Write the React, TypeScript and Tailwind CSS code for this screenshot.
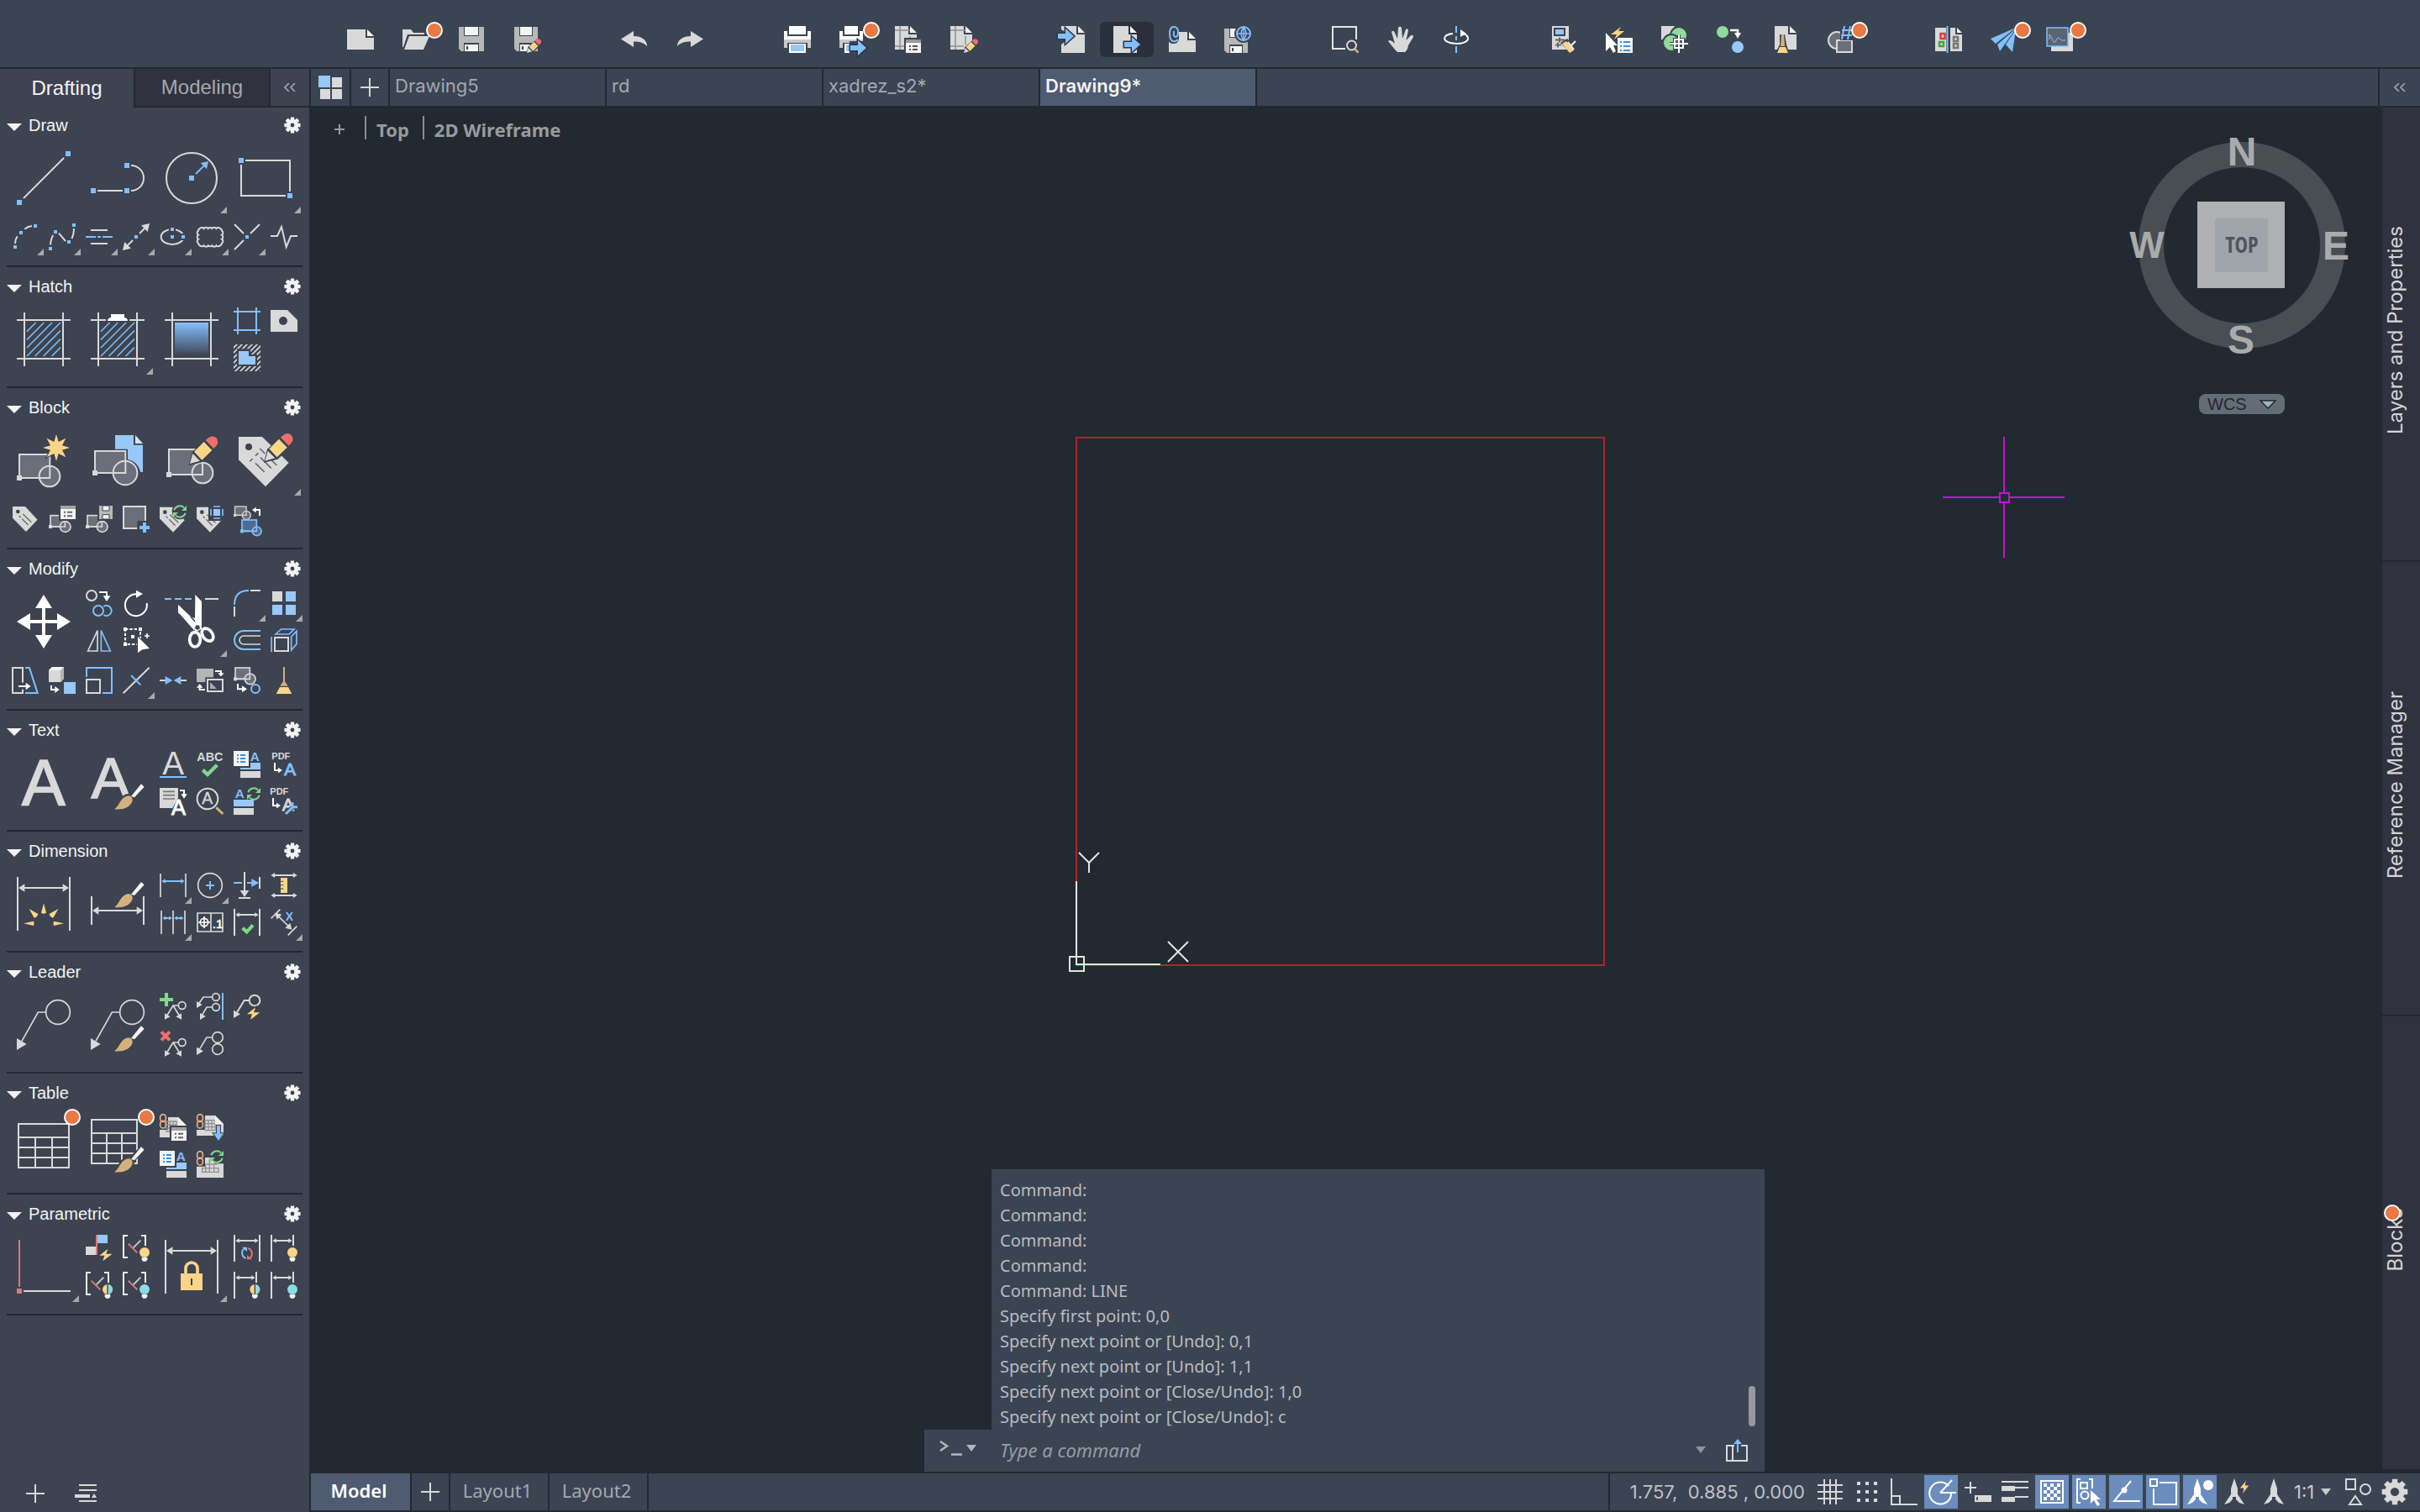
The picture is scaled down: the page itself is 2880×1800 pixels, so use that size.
import React from "react";

const W = "#d9d9d9";
const L = "#f4f4f4";
const B = "#82bfff";
const F = "#97c8f8";
const G = "#6b6f7a";
const Y = "#fad587";
const R = "#ef6f6a";
const N = "#7fd98c";
const BG = "#3d4350";
const TAN = "#d4b07c";

type P = { x: number; y: number };

/* Palette drawings use three units per pixel; x and y are the top-left corner of the glyph box. */
function Ico({ x, y, big, children }: P & { big?: boolean; children: React.ReactNode }) {
  const s = big ? 192 : 96;
  return (
    <svg viewBox={`${x} ${y} ${s} ${s}`} className={big ? "size-16 overflow-visible" : "size-8 overflow-visible"} fill="none" stroke={W} strokeWidth={6} aria-hidden="true">
      {children}
    </svg>
  );
}
const Sq = ({ x, y, s = 18, c = B }: P & { s?: number; c?: string }) => <rect x={x} y={y} width={s} height={s} fill={c} stroke="none" />;
const Fill = ({ d, c = W, o }: { d: string; c?: string; o?: boolean }) => <path d={d} fill={c} stroke={o ? BG : "none"} strokeWidth={o ? 6 : 0} paintOrder="stroke" />;
const T = ({ x, y, s, c = W, w = 0, b, children }: P & { s: number; c?: string; w?: number; b?: boolean; children: string }) => (
  <text x={x} y={y} fontSize={s} fill={c} stroke={w ? c : "none"} strokeWidth={w} fontWeight={b ? 700 : 400} fontFamily="Liberation Sans, Arial, sans-serif">
    {children}
  </text>
);
const Pencil = ({ x, y, k = 1 }: P & { k?: number }) => (
  <g transform={`translate(${x} ${y}) scale(${k})`} stroke="none">
    <path d="M-4 6L8 -42L66 -94A24 24 0 0 1 98 -56L46 -6Z" fill={BG} />
    <path d="M0 0L10 -36L36 -10Z" fill={W} />
    <path d="M15 -43L50 -78L79 -48L43 -13Z" fill={Y} />
    <path d="M56 -84L66 -92A19 19 0 0 1 94 -64L85 -54Z" fill={R} />
  </g>
);
const Brush = ({ x, y }: P) => (
  <g transform={`translate(${x} ${y})`} stroke="none">
    <path d="M-8 6C10 -10 18 -58 56 -56L100 -98L116 -80L74 -40C66 0 30 8 -8 6Z" fill={BG} />
    <path d="M60 -46L96 -90L107 -80L72 -42Z" fill={L} />
    <path d="M0 0C20 -12 22 -46 52 -48C62 -46 66 -40 65 -30C58 -6 30 4 0 0Z" fill={TAN} />
  </g>
);
const Bolt = ({ x, y }: P) => <Fill c={Y} o d={`M${x + 30} ${y}L${x} ${y + 24}H${x + 18}L${x + 12} ${y + 44}L${x + 46} ${y + 18}H${x + 24}Z`} />;
const Sync = ({ x, y, a = N, b = N }: P & { a?: string; b?: string }) => (
  <g transform={`translate(${x} ${y})`} strokeWidth={6}>
    <path d="M-20 -5A21 21 0 0 1 15 -14M20 5A21 21 0 0 1 -15 14" stroke={a} />
    <path d="M24 -21V-3H6Z" fill={a} stroke="none" />
    <path d="M-24 21V3H-6Z" fill={b} stroke="none" />
  </g>
);
const Frame = ({ x, y }: P) => <path d={`M${x + 27} ${y}v192M${x + 165} ${y}v192M${x} ${y + 27}h192M${x} ${y + 165}h192`} />;
const Hatching = ({ x, y }: P) => (
  <path stroke="#7db9f5" strokeWidth={5} d={`M${x} ${y + 32}l32 -32M${x} ${y + 61}l61 -61M${x} ${y + 90}l90 -90M${x} ${y + 120}l120 -120M${x + 29} ${y + 120}l91 -91M${x + 59} ${y + 120}l61 -61M${x + 89} ${y + 120}l31 -31`} />
);
const MiniBlock = ({ x, y, c = W, r = 19 }: P & { c?: string; r?: number }) => (
  <g stroke={c} strokeWidth={5}>
    <rect x={x + 6} y={y} width={52} height={40} fill={c === B ? "#4e6b91" : G} />
    <circle cx={x + 59} cy={y + 40} r={r} fill={c === B ? "#4e6b91" : G} />
    <path d={`M${x + 6} ${y + 40}h52v-16`} />
    <rect x={x} y={y + 34} width={12} height={12} fill={c} stroke="none" />
  </g>
);
const Window = ({ x, y }: P) => (
  <g stroke="none">
    <rect x={x - 6} y={y - 6} width={66} height={60} fill={BG} />
    <rect x={x} y={y} width={54} height={48} fill={L} />
    <rect x={x} y={y} width={54} height={12} fill="#a3a3a3" />
    <path d={`M${x + 12} ${y + 20}h6v6h-6zM${x + 24} ${y + 20}h18v6h-18zM${x + 12} ${y + 34}h6v6h-6zM${x + 24} ${y + 34}h18v6h-18z`} fill="#666" />
  </g>
);
const ListCard = ({ x, y }: P) => (
  <g stroke="none">
    <rect x={x - 6} y={y - 6} width={66} height={66} fill={BG} />
    <rect x={x} y={y} width={54} height={54} fill={L} />
    <path d={`M${x + 12} ${y + 12}h6v6h-6zM${x + 24} ${y + 12}h18v6h-18zM${x + 12} ${y + 24}h6v6h-6zM${x + 24} ${y + 24}h18v6h-18zM${x + 12} ${y + 36}h6v6h-6zM${x + 24} ${y + 36}h18v6h-18z`} fill="#3d8ee8" />
  </g>
);
const MiniTag = ({ x, y }: P) => (
  <g transform={`translate(${x} ${y})`}>
    <path d="M0 0H45L89 47L48 90L0 41Z" fill={W} stroke="none" />
    <circle cx={19} cy={18} r={7} fill={BG} stroke="none" />
    <path d="M37 27L67 56M23 33L29 39M34 44L56 66" stroke="#6a6a6a" strokeWidth={4} />
  </g>
);
const Disk = ({ x, y }: P) => (
  <g stroke="none">
    <rect x={x - 6} y={y - 6} width={60} height={60} fill={BG} />
    <rect x={x} y={y} width={48} height={48} fill="#b8b8b8" />
    <path d={`M${x + 12} ${y}h24v18h-24zM${x + 12} ${y + 32}h24v16h-24z`} fill={L} stroke={BG} strokeWidth={3} />
  </g>
);
const HArrow = ({ a, b, y, c = W, s = 1 }: { a: number; b: number; y: number; c?: string; s?: number }) => (
  <g>
    <path d={`M${a + 10} ${y}H${b - 10}`} stroke={c} />
    <path d={`M${a} ${y}l${22 * s} ${-14 * s}v${28 * s}zM${b} ${y}l${-22 * s} ${-14 * s}v${28 * s}z`} fill={c} stroke="none" />
  </g>
);
const Turn = ({ d, h }: { d: string; h: string }) => (
  <g>
    <path d={d} stroke="#fff" />
    <path d={h} fill="#fff" stroke="none" />
  </g>
);
const Bulb = ({ x, y, c = Y, c2 }: P & { c?: string; c2?: string }) => (
  <g stroke="none">
    <circle cx={x} cy={y} r={23} fill={BG} />
    <circle cx={x} cy={y} r={18} fill={c} />
    {c2 && <path d={`M${x} ${y - 18}a18 18 0 0 1 0 36z`} fill={c2} />}
    {c2 && <path d={`M${x} ${y - 20}v40`} stroke={BG} strokeWidth={4} />}
    <path d={`M${x - 10} ${y + 18}h20v8l-5 6h-10l-5 -6z`} fill={L} />
  </g>
);
const Multi = ({ x, y }: P) => (
  <g transform={`translate(${x} ${y})`} strokeWidth={5}>
    <circle cx={62} cy={14} r={13} />
    <path d="M49 14H30L8 50M30 14L52 50" />
    <path d="M0 64V42L20 54ZM60 64V42L40 54Z" fill={W} stroke="none" />
  </g>
);
const LeaderShape = ({ x, y }: P) => (
  <g transform={`translate(${x} ${y})`} strokeWidth={5}>
    <circle cx={147} cy={51} r={43} />
    <path d="M103 51H76L18 154" />
    <path d="M0 186V144L35 165Z" fill={W} stroke="none" />
  </g>
);
const Chain = ({ x, y }: P) => (
  <g stroke="#e8b080" strokeWidth={5}>
    <rect x={x + 2} y={y + 2} width={20} height={26} rx={10} />
    <rect x={x + 2} y={y + 25} width={20} height={26} rx={10} />
  </g>
);
const Cells = ({ x, y }: P) => (
  <g stroke="#8f8f8f" strokeWidth={4}>
    <path d={`M${x} ${y}h36v36h-36zM${x} ${y + 12}h36M${x} ${y + 24}h36M${x + 12} ${y}v36M${x + 24} ${y}v36`} />
  </g>
);
const Bracket = ({ x, y, bulb, bulb2 }: P & { bulb: string; bulb2?: string }) => (
  <g transform={`translate(${x} ${y})`}>
    <path d="M18 3H3V81H18M66 3H81V40" stroke="#f0f0f0" />
    <path d="M20 32L52 64" stroke="#dd7b79" />
    <path d="M38 46L64 20" stroke="#c9c9c9" />
    <Bulb x={78} y={63} c={bulb} c2={bulb2} />
  </g>
);

type Cell = { n: string; big?: boolean; corner?: boolean; badge?: boolean; i: React.ReactNode } | null;
type Section = { title: string; main: Cell[]; row?: Cell[] };

const sections: Section[] = [
  {
    title: "Draw",
    main: [
      { n: "Line", big: true, i: <Ico big x={60} y={330}><path d="M84 498L228 354" /><Sq x={60} y={504} /><Sq x={234} y={330} /></Ico> },
      { n: "Polyline", big: true, i: <Ico big x={324} y={330}><path d="M348 471H438M468 381A45 45 0 0 1 468 471" /><Sq x={324} y={462} /><Sq x={444} y={462} /><Sq x={444} y={372} /></Ico> },
      { n: "Circle", big: true, corner: true, i: <Ico big x={588} y={330}><circle cx={684} cy={426} r={90} /><Sq x={675} y={417} /><path d="M699 411L728 382" stroke={B} /><Fill c={B} d="M744 366L738 394L716 372Z" /></Ico> },
      { n: "Rectangle", big: true, corner: true, i: <Ico big x={852} y={330}><path d="M876 363H1035V474M1020 489H861V378" /><Sq x={852} y={354} /><Sq x={1026} y={480} /></Ico> },
    ],
    row: [
      { n: "Arc", corner: true, i: <Ico x={42} y={588}><path d="M54 660Q54 645 62 634M88 608Q98 599 114 597" /><Sq s={12} x={48} y={666} /><Sq s={12} x={69} y={615} /><Sq s={12} x={120} y={591} /></Ico> },
      { n: "Spline", corner: true, i: <Ico x={174} y={588}><path d="M180 664Q182 642 190 630M210 623L234 651M264 606Q263 630 256 642" /><Sq s={12} x={174} y={672} /><Sq s={12} x={192} y={612} /><Sq s={12} x={240} y={648} /><Sq s={12} x={258} y={588} /></Ico> },
      { n: "Centerline", corner: true, i: <Ico x={306} y={588}><path d="M324 612H384M324 660H384" /><path stroke={B} d="M306 636H342M348 636H360M366 636H402" /></Ico> },
      { n: "Construction line", corner: true, i: <Ico x={438} y={588}><path d="M498 624L516 606M474 648L456 666" /><Fill d="M534 588L527 618L504 595ZM438 684L445 654L468 677Z" /><Sq s={12} x={480} y={630} /></Ico> },
      { n: "Ellipse", corner: true, i: <Ico x={570} y={588}><ellipse cx={615} cy={636} rx={40} ry={27} /><rect x={603} y={598} width={24} height={22} fill={BG} stroke="none" /><rect x={642} y={624} width={24} height={24} fill={BG} stroke="none" /><Sq s={12} x={609} y={603} /><Sq s={12} x={609} y={630} /><Sq s={12} x={648} y={630} /></Ico> },
      { n: "Revision cloud", corner: true, i: <Ico x={702} y={588}><path d="M714 606a8 6 0 0 1 14 0a8 6 0 0 1 15 0a8 6 0 0 1 14 0a8 6 0 0 1 15 0a8 6 0 0 1 14 0a9 9 0 0 1 6 8a6 8 0 0 1 0 15a6 8 0 0 1 0 15a6 8 0 0 1 0 15a9 9 0 0 1 -6 8a8 6 0 0 1 -14 0a8 6 0 0 1 -15 0a8 6 0 0 1 -14 0a8 6 0 0 1 -15 0a8 6 0 0 1 -14 0a9 9 0 0 1 -6 -8a6 8 0 0 1 0 -15a6 8 0 0 1 0 -15a6 8 0 0 1 0 -15a9 9 0 0 1 6 -8" /></Ico> },
      { n: "Point", corner: true, i: <Ico x={834} y={588}><path d="M837 591L870 624M927 591L894 624M837 681L870 648" /><Sq s={12} x={876} y={630} /></Ico> },
      { n: "Break line", i: <Ico x={966} y={588}><path d="M966 633H990L1005 600L1022 672L1038 633H1062" /></Ico> },
    ],
  },
  {
    title: "Hatch",
    main: [
      { n: "Hatch fill", big: true, i: <Ico big x={60} y={906}><Frame x={60} y={906} /><Hatching x={96} y={942} /></Ico> },
      { n: "Hatch edit", big: true, corner: true, i: <Ico big x={324} y={906}><Frame x={324} y={906} /><Hatching x={360} y={942} /><rect x={378} y={924} width={84} height={14} fill={BG} stroke="none" /><Fill c="#fff" d="M396 912H444V924Q456 926 456 936H384Q384 926 396 924Z" /></Ico> },
      {
        n: "Gradient", big: true,
        i: <Ico big x={588} y={906}><defs><linearGradient id="fade" x1="0" y1="0" x2="0" y2="1"><stop offset="0" stopColor={B} /><stop offset="1" stopColor={BG} /></linearGradient></defs><Frame x={588} y={906} /><rect x={624} y={942} width={120} height={120} fill="url(#fade)" stroke="none" /></Ico>,
      },
      { n: "Boundary", i: <Ico x={834} y={888}><path stroke={B} d="M849 888V984M915 888V984M834 903H930M834 969H930" /></Ico> },
      { n: "Wipeout", i: <Ico x={966} y={888}><Fill d="M966 897H1026L1062 933V975H966Z" /><circle cx={1011} cy={936} r={15} fill={BG} stroke="none" /></Ico> },
      {
        n: "Region",
        i: <Ico x={834} y={1020}><defs><clipPath id="regionBox"><rect x={834} y={1020} width={96} height={96} /></clipPath></defs><g clipPath="url(#regionBox)" strokeWidth={5}><path d="M822 1044l30 -30M822 1062l48 -48M822 1080l66 -66M822 1098l84 -84M822 1116l102 -102M830 1126l110 -110M848 1126l90 -90M866 1126l72 -72M884 1126l54 -54M902 1126l36 -36M920 1126l18 -18" /></g><Fill c={BG} d="M846 1036H894V1056H918V1098H846Z" /><Fill c={F} d="M852 1044H888V1062H912V1092H852Z" /></Ico>,
      },
    ],
  },
  {
    title: "Block",
    main: [
      { n: "Create block", big: true, i: <Ico big x={60} y={168}><rect x={69} y={243} width={109} height={84} fill={G} /><circle cx={177} cy={321} r={37} fill={G} /><path d="M140 327H178V284" /><Sq c={W} x={60} y={318} /><Fill o c={Y} d="M201 171L209 198L235 185L222 211L249 219L222 227L235 253L209 240L201 267L193 240L167 253L180 227L153 219L180 211L167 185L193 198Z" /></Ico> },
      { n: "Insert block", big: true, i: <Ico big x={324} y={168}><Fill c={F} d="M411 174H477V209H510V306H502Q492 268 456 260V224H411Z" /><Fill c="#cfe5fc" d="M483 174L510 204H483Z" /><rect x={339} y={231} width={109} height={78} fill={G} /><circle cx={447} cy={309} r={43} fill={G} /><path d="M404 309H448V268" /><Sq c={W} x={330} y={300} /></Ico> },
      { n: "Edit block", big: true, i: <Ico big x={588} y={168}><rect x={603} y={225} width={120} height={90} fill={G} /><circle cx={723} cy={309} r={37} fill={G} /><path d="M686 315H723V274" /><Sq c={W} x={594} y={306} /><Pencil x={678} y={276} /></Ico> },
      { n: "Edit attributes", big: true, corner: true, i: <Ico big x={852} y={168}><Fill d="M852 180H936L1031 273L948 358L852 262Z" /><circle cx={888} cy={216} r={12} fill={BG} stroke="none" /><path stroke="#6a6a6a" strokeWidth={5} d="M928 222L946 240M962 256L988 282M912 248L922 238M892 268L902 258M930 254L968 292M912 274L944 306" /><Pencil x={946} y={266} /></Ico> },
    ],
    row: [
      { n: "Define attribute", i: <Ico x={42} y={426}><MiniTag x={45} y={429} /></Ico> },
      { n: "Block palette", i: <Ico x={174} y={426}><MiniBlock x={174} y={461} /><Window x={216} y={426} /></Ico> },
      { n: "Write block", i: <Ico x={306} y={426}><MiniBlock x={306} y={461} /><Disk x={354} y={426} /></Ico> },
      { n: "Set base point", i: <Ico x={438} y={426}><rect x={441} y={429} width={78} height={78} fill={G} /><rect x={490} y={480} width={50} height={48} fill={BG} stroke="none" /><path d="M498 504H534M516 486V522" stroke={B} strokeWidth={12} /></Ico> },
      { n: "Sync attributes", i: <Ico x={570} y={426}><MiniTag x={570} y={431} /><circle cx={642} cy={447} r={28} fill={BG} stroke="none" /><Sync x={642} y={447} /></Ico> },
      { n: "Attribute extraction", i: <Ico x={702} y={426}><MiniTag x={702} y={431} /><rect x={744} y={420} width={60} height={60} fill={BG} stroke="none" /><rect x={762} y={438} width={24} height={24} fill={F} stroke="none" /><path stroke={B} strokeWidth={5} d="M762 429H786M762 471H786M753 438V462M795 438V462" /></Ico> },
      { n: "Replace block", i: <Ico x={834} y={426}><g transform="translate(834 429) scale(.78)"><MiniBlock x={0} y={0} /></g><Turn d="M912 441H927V462" h="M900 441L914 431V451Z" /><MiniBlock x={858} y={477} c={B} r={16} /></Ico> },
    ],
  },
  {
    title: "Modify",
    main: [
      { n: "Move", big: true, i: <Ico big x={60} y={744}><path stroke="#fff" strokeWidth={12} d="M100 840H212M156 780V900" /><Fill c="#fff" d="M60 840L108 810V870ZM252 840L204 810V870ZM156 744L126 792H186ZM156 936L126 888H186Z" /></Ico> },
      { n: "Copy", i: <Ico x={306} y={726}><circle cx={327} cy={747} r={18} /><Turn d="M354 735H381V750" h="M368 748H394L381 768Z" /><g stroke={B}><circle cx={351} cy={801} r={18} /><path d="M370 786A18 18 0 1 1 370 816" /></g></Ico> },
      { n: "Rotate", i: <Ico x={438} y={726}><path stroke="#fff" d="M490 742A39 39 0 1 0 524 774" /><Fill c="#fff" d="M486 728L510 741L486 755Z" /></Ico> },
      { n: "Trim", big: true, corner: true, i: <Ico big x={588} y={744}><path stroke={B} d="M588 759H612M624 759H648M660 759H684" /><path d="M732 759H780" /><Fill c="#fff" d="M697 744L720 768V866L696 878V828L636 810V780L696 836Z" /><Fill c={BG} d="M650 816L690 828L697 844L694 868Z" /><Fill c="#fff" d="M636 780L700 846L694 872L636 806Z" /><g stroke="#fff" strokeWidth={11}><ellipse cx={696} cy={904} rx={19} ry={26} /><ellipse cx={741} cy={887} rx={17} ry={25} transform="rotate(-38 741 887)" /></g><circle cx={705} cy={861} r={10} fill={BG} stroke="#fff" strokeWidth={3} /></Ico> },
      { n: "Fillet", corner: true, i: <Ico x={834} y={726}><path d="M894 729H930M837 786V822" /><path stroke={B} d="M837 780Q837 729 888 729" /></Ico> },
      { n: "Array", corner: true, i: <Ico x={966} y={726}><Sq c={W} s={36} x={972} y={732} /><Sq c={F} s={36} x={1020} y={732} /><Sq c={F} s={36} x={972} y={780} /><Sq c={F} s={36} x={1020} y={780} /></Ico> },
      { n: "Mirror", i: <Ico x={306} y={858}><path strokeWidth={5} d="M348 872V945H314Z" /><path strokeWidth={5} stroke={B} d="M361 872V945H394Z" /></Ico> },
      { n: "Stretch", i: <Ico x={438} y={858}><path stroke="#fff" strokeDasharray="10 6" d="M447 867H501V921H447Z" /><g><Sq c="#fff" s={12} x={441} y={861} /><Sq c="#fff" s={12} x={495} y={861} /><Sq c="#fff" s={12} x={441} y={915} /><Sq c="#fff" s={12} x={468} y={888} /></g><path stroke="#fff" strokeWidth={5} d="M516 891H534M525 882V900" /><Fill o c="#fff" d="M492 894V952L508 940L534 936Z" /></Ico> },
      { n: "Offset", i: <Ico x={834} y={858}><path stroke={B} d="M930 873H870A33 33 0 0 0 870 939H930" /><path d="M930 891H870A15 15 0 0 0 870 921H930" strokeWidth={5} /></Ico> },
      { n: "Array 3D", i: <Ico x={966} y={858}><rect x={981} y={897} width={48} height={48} /><path stroke={B} strokeWidth={5} d="M969 894V948M984 885L1004 867H1050L1032 885ZM1040 894L1059 874V920L1040 942Z" /></Ico> },
    ],
    row: [
      { n: "Taper", i: <Ico x={42} y={1002}><path d="M45 1005H81V1095H45Z" /><path stroke={B} d="M90 1005H105L134 1095H90" /><rect x={60} y={1058} width={54} height={24} fill={BG} stroke="none" /><Turn d="M66 1071H96" h="M110 1071L92 1058V1084Z" /></Ico> },
      { n: "Flatten", i: <Ico x={174} y={1002}><Fill d="M174 1014L186 1002H228V1044L216 1056H174Z" /><Fill c={L} d="M174 1014L186 1002H228L216 1014Z" /><Fill c="#b5b5b5" d="M216 1014L228 1002V1044L216 1056Z" /><Turn d="M183 1068V1083H198" h="M212 1083L196 1071V1095Z" /><Sq c={F} s={42} x={228} y={1056} /></Ico> },
      { n: "Scale", i: <Ico x={306} y={1002}><path stroke={B} d="M309 1038V1005H399V1095H366" /><rect x={309} y={1047} width={48} height={48} /></Ico> },
      { n: "Break", corner: true, i: <Ico x={438} y={1002}><path d="M440 1096L533 1004" /><path stroke={B} d="M468 1032L502 1066" /></Ico> },
      { n: "Join", i: <Ico x={570} y={1002}><path d="M570 1050H592M644 1050H666" /><Fill c={B} d="M616 1050L590 1035V1065ZM620 1050L646 1035V1065Z" /></Ico> },
      { n: "Draw order", i: <Ico x={702} y={1002}><rect x={702} y={1008} width={60} height={48} fill="#b5b5b5" stroke="none" /><rect x={733} y={1039} width={72} height={60} fill={BG} stroke="none" /><rect x={741} y={1047} width={54} height={42} /><Fill c="#aaa" d="M750 1056L774 1080H750Z" /><Turn d="M768 1017H789V1026" h="M778 1024H800L789 1036Z" /><Turn d="M732 1083H713V1074" h="M702 1076H724L713 1062Z" /></Ico> },
      { n: "Copy nested", i: <Ico x={834} y={1002}><MiniBlock x={834} y={1005} /><Turn d="M849 1062V1081H866" h="M882 1081L864 1069V1093Z" /><circle cx={912} cy={1080} r={15} stroke={B} /></Ico> },
      { n: "Purge", i: <Ico x={966} y={1002}><path stroke={TAN} d="M1014 1002V1060" /><Fill c={TAN} d="M1011 1054H1017L1028 1070H1000Z" /><Fill c={Y} d="M999 1074H1029L1042 1098H986Z" /></Ico> },
    ],
  },
  {
    title: "Text",
    main: [
      { n: "Multiline text", big: true, i: <Ico big x={60} y={180}><T x={78} y={358} s={232} w={5}>A</T></Ico> },
      { n: "Match text", big: true, i: <Ico big x={324} y={180}><T x={326} y={329} s={206} w={5}>A</T><Brush x={408} y={370} /></Ico> },
      { n: "Single line text", i: <Ico x={570} y={162}><T x={580} y={246} s={116}>A</T><path stroke={B} d="M570 255H666" /></Ico> },
      { n: "Spell check", i: <Ico x={702} y={162}><T b x={703} y={198} s={43}>ABC</T><path stroke={N} strokeWidth={13} d="M724 230L741 246L775 212" /></Ico> },
      { n: "Text style", i: <Ico x={834} y={162}><rect x={858} y={204} width={72} height={24} fill={F} stroke="none" /><ListCard x={834} y={162} /><rect x={858} y={234} width={72} height={24} fill={W} stroke="none" /><T b x={893} y={198} s={46} c={B}>A</T></Ico> },
      { n: "PDF text import", i: <Ico x={966} y={162}><T b x={970} y={192} s={33}>PDF</T><Turn d="M981 204V231H996" h="M1008 231L993 221V241Z" /><T x={1015} y={250} s={62} w={3} c={B}>A</T></Ico> },
      { n: "Text to multiline", i: <Ico x={570} y={294}><Fill d="M570 294H636V330L616 366H570Z" /><path stroke="#777" strokeWidth={5} d="M582 307H624M582 320H624M582 333H624" /><Turn d="M642 303H657V318" h="M646 316H668L657 332Z" /><T x={612} y={390} s={76} w={3} c="#fff">A</T></Ico> },
      { n: "Find text", i: <Ico x={702} y={294}><circle cx={741} cy={333} r={37} /><T x={721} y={350} s={58} w={1}>A</T><path stroke={TAN} strokeWidth={9} d="M772 364L796 387" /></Ico> },
      { n: "Update fields", i: <Ico x={834} y={294}><T b x={839} y={329} s={46} c={B}>A</T><Sync x={906} y={315} /><rect x={834} y={336} width={72} height={24} fill={F} stroke="none" /><rect x={834} y={366} width={72} height={24} fill={W} stroke="none" /></Ico> },
      { n: "PDF text settings", i: <Ico x={966} y={294}><T b x={964} y={318} s={33}>PDF</T><Turn d="M975 330V357H990" h="M1002 357L987 347V367Z" /><T x={1008} y={376} s={62} w={3}>A</T><path stroke={BG} strokeWidth={15} d="M1014 392L1046 362" /><path stroke={B} strokeWidth={9} d="M1020 387L1046 362M1044 346V362H1062" /></Ico> },
    ],
  },
  {
    title: "Dimension",
    main: [
      { n: "Quick dimension", big: true, i: <Ico big x={60} y={612}><path d="M63 612V804M249 612V804" /><HArrow a={66} b={246} y={651} /><Fill c={Y} d="M156 706L165 740Q156 746 147 740ZM104 726L136 744Q134 756 122 758ZM208 726L176 744Q178 756 190 758ZM84 778L120 770Q124 778 120 786ZM228 778L192 770Q188 778 192 786Z" /></Ico> },
      { n: "Dimension style", big: true, i: <Ico big x={324} y={612}><path d="M327 681V783M513 681V783" /><HArrow a={330} b={510} y={732} /><Brush x={408} y={720} /></Ico> },
      { n: "Linear", corner: true, i: <Ico x={570} y={594}><path strokeWidth={5} d="M573 600V684M663 600V684" /><HArrow a={577} b={659} y={627} c={B} s={0.6} /></Ico> },
      { n: "Diameter", corner: true, i: <Ico x={702} y={594}><circle cx={750} cy={642} r={43} strokeWidth={5} /><path stroke={B} d="M735 642H765M750 627V657" /></Ico> },
      { n: "Ordinate", i: <Ico x={834} y={594}><path d="M873 594V668M852 687H894M927 612V654" /><Fill d="M857 660H889L873 684Z" /><path stroke={B} d="M834 633H864M882 633H900" /><Fill c={B} d="M924 633L898 618V648Z" /></Ico> },
      { n: "Dimension space", i: <Ico x={966} y={594}><HArrow a={967} b={1061} y={606} s={0.65} /><HArrow a={967} b={1061} y={678} s={0.65} /><rect x={1002} y={615} width={24} height={54} fill={Y} stroke="none" /><path stroke="#7a6a45" strokeWidth={4} d="M1002 628H1012M1002 641H1012M1002 654H1012" /></Ico> },
      { n: "Continue", corner: true, i: <Ico x={570} y={726}><path strokeWidth={5} d="M576 732V816M618 732V816M660 732V816" /><HArrow a={580} b={615} y={759} c={B} s={0.55} /><HArrow a={621} b={656} y={759} c={B} s={0.55} /></Ico> },
      { n: "Tolerance", i: <Ico x={702} y={726}><path strokeWidth={5} d="M705 741H795V807H705ZM753 741V807" /><circle cx={729} cy={774} r={14} stroke="#fff" strokeWidth={5} /><path stroke="#fff" strokeWidth={5} d="M708 774H750M729 753V795" /><T x={758} y={794} s={46} w={2} c="#fff">.1</T></Ico> },
      { n: "Inspect", i: <Ico x={834} y={726}><path d="M837 726V822M927 726V822" /><HArrow a={841} b={923} y={747} s={0.6} /><path stroke={N} strokeWidth={12} d="M866 794L881 808L903 784" /></Ico> },
      { n: "Oblique", corner: true, i: <Ico x={966} y={726}><path strokeWidth={5} d="M968 760L1000 728M1028 820L1060 788M990 748L1034 792" /><Fill d="M982 740L1006 746L988 764ZM1042 800L1018 794L1036 776Z" /><T b x={1019} y={767} s={42} c={B}>X</T></Ico> },
    ],
  },
  {
    title: "Leader",
    main: [
      { n: "Multileader", big: true, i: <Ico big x={60} y={174}><LeaderShape x={60} y={174} /></Ico> },
      { n: "Leader style", big: true, i: <Ico big x={324} y={174}><LeaderShape x={324} y={174} /><Brush x={408} y={364} /></Ico> },
      { n: "Add leader", i: <Ico x={570} y={156}><path stroke={N} strokeWidth={12} d="M570 180H618M594 156V204" /><Multi x={588} y={187} /></Ico> },
      { n: "Align leaders", i: <Ico x={702} y={156}><g strokeWidth={5}><circle cx={771} cy={171} r={13} /><circle cx={771} cy={207} r={13} /><path d="M758 171H726L709 196M758 207H738L721 236" /></g><Fill d="M702 210V186L722 198ZM714 252V228L734 240Z" /><path stroke={B} d="M795 156V252" /></Ico> },
      { n: "Quick leader", i: <Ico x={834} y={156}><circle cx={909} cy={183} r={19} /><path d="M890 183H872L846 226" /><Fill d="M834 246V218L858 232Z" /><Bolt x={882} y={208} /></Ico> },
      null,
      { n: "Remove leader", i: <Ico x={570} y={288}><path stroke={R} strokeWidth={12} d="M576 295L606 325M606 295L576 325" /><Multi x={588} y={319} /></Ico> },
      { n: "Collect leaders", i: <Ico x={702} y={288}><g strokeWidth={5}><circle cx={777} cy={315} r={19} /><circle cx={777} cy={357} r={19} /><path d="M758 315H738L712 358" /></g><Fill d="M702 378V350L726 364Z" /></Ico> },
    ],
  },
  {
    title: "Table",
    main: [
      { n: "Table", big: true, badge: true, i: <Ico big x={60} y={606}><path d="M66 624H246V780H66ZM66 672H246M66 708H246M66 744H246M126 672V780M186 672V780" /></Ico> },
      { n: "Table style", big: true, badge: true, i: <Ico big x={324} y={606}><path d="M327 609H489V765H327ZM327 657H489M327 693H489M327 729H489M381 657V765M435 657V765" /><Brush x={408} y={796} /></Ico> },
      { n: "Data link", i: <Ico x={570} y={588}><Fill d="M600 600H636L666 630V672H570V645H600Z" /><Cells x={594} y={615} /><Fill c={L} d="M636 600L666 630H636Z" /><Chain x={570} y={588} /><Window x={612} y={636} /></Ico> },
      { n: "Download data", i: <Ico x={702} y={588}><Fill d="M732 594H768L798 624V666H702V645H732Z" /><Cells x={732} y={611} /><Fill c={L} d="M768 594L798 624H768Z" /><Chain x={702} y={588} /><Fill o c={B} d="M774 630H786V658H798L780 684L762 658H774Z" /></Ico> },
      null,
      null,
      { n: "Table text", i: <Ico x={570} y={720}><rect x={594} y={762} width={72} height={24} fill={F} stroke="none" /><ListCard x={570} y={720} /><rect x={594} y={792} width={72} height={24} fill={W} stroke="none" /><T b x={629} y={756} s={46} c={B}>A</T></Ico> },
      { n: "Update table", i: <Ico x={702} y={720}><Fill d="M732 744H748L768 766H798V816H702V776H732Z" /><path stroke="#8f8f8f" strokeWidth={4} d="M722 782H780V796H722ZM734 768V796M748 750V796M764 770V796M734 768H776" /><Chain x={702} y={720} /><Sync x={774} y={741} /></Ico> },
    ],
  },
  {
    title: "Parametric",
    main: [
      { n: "Geometric constraint", big: true, corner: true, i: <Ico big x={60} y={1038}><path stroke="#dd7b79" d="M69 1038V1206" /><Sq c="#dd7b79" x={60} y={1212} /><path d="M84 1221H252" /></Ico> },
      { n: "Auto constrain", i: <Ico x={306} y={1020}><rect x={348} y={1020} width={36} height={30} fill={F} stroke="none" /><rect x={306} y={1062} width={36} height={30} fill={W} stroke="none" /><path stroke="#dd7b79" d="M345 1020V1092" /><Bolt x={355} y={1070} /></Ico> },
      { n: "Show constraint", i: <Ico x={438} y={1020}><Bracket x={438} y={1020} bulb={Y} /></Ico> },
      { n: "Dimensional constraint", big: true, corner: true, i: <Ico big x={588} y={1038}><path d="M591 1038V1230M777 1038V1230" /><HArrow a={594} b={774} y={1077} /><path stroke={Y} strokeWidth={11} d="M663 1162V1140A21 21 0 0 1 705 1140V1162" /><rect x={645} y={1158} width={78} height={60} fill={Y} stroke="none" /><path stroke={BG} d="M684 1176V1200" /></Ico> },
      { n: "Convert dimension", i: <Ico x={834} y={1020}><path d="M837 1020V1116M927 1020V1116" /><HArrow a={841} b={923} y={1041} s={0.6} /><path stroke={B} d="M878 1104A20 20 0 0 1 874 1068" /><Fill c={B} d="M864 1064H882V1080Z" /><path stroke={R} d="M886 1068A20 20 0 0 1 890 1104" /><Fill c={R} d="M900 1108H882V1092Z" /></Ico> },
      { n: "Show dynamic", i: <Ico x={966} y={1020}><path d="M969 1020V1116M1047 1020V1060" /><HArrow a={973} b={1043} y={1041} s={0.6} /><Bulb x={1044} y={1083} /></Ico> },
      { n: "Show all geometric", i: <Ico x={306} y={1152}><Bracket x={306} y={1152} bulb={Y} bulb2="#8adbe6" /></Ico> },
      { n: "Hide geometric", i: <Ico x={438} y={1152}><Bracket x={438} y={1152} bulb="#8adbe6" /></Ico> },
      { n: "Show all dynamic", i: <Ico x={834} y={1152}><path d="M837 1152V1248M915 1152V1192" /><HArrow a={841} b={911} y={1173} s={0.6} /><Bulb x={910} y={1215} c2="#8adbe6" /></Ico> },
      { n: "Hide dynamic", i: <Ico x={966} y={1152}><path d="M969 1152V1248M1047 1152V1192" /><HArrow a={973} b={1043} y={1173} s={0.6} /><Bulb x={1044} y={1215} c="#8adbe6" /></Ico> },
    ],
  },
];

const Badge = ({ className }: { className: string }) => <span className={`absolute size-5 rounded-full border-2 border-white bg-[#e87844] ${className}`} />;

function PaletteCell({ cell }: { cell: Cell }) {
  if (!cell) return <span />;
  return (
    <button aria-label={cell.n} className={cell.big ? "relative col-span-2 row-span-2 grid size-22 place-items-center" : "relative grid size-11 place-items-center"}>
      {cell.i}
      {cell.corner && <svg viewBox="0 0 8 8" className={cell.big ? "absolute right-0.5 bottom-0.5 size-2" : "absolute right-0 bottom-0 size-2"} aria-hidden="true"><path d="M8 0V8H0Z" fill="#a8a9ac" /></svg>}
      {cell.badge && <Badge className="top-0 right-0" />}
    </button>
  );
}

const Gear = ({ className, teeth = 4.4 }: { className: string; teeth?: number }) => (
  <svg viewBox="-10 -10 20 20" className={className} aria-hidden="true">
    <g fill="currentColor">
      {[0, 45, 90, 135].map((a) => (
        <rect key={a} x={-teeth / 2} y={-9.6} width={teeth} height={19.2} rx={0.6} transform={`rotate(${a})`} />
      ))}
    </g>
    <circle r={teeth > 4 ? 4.8 : 5} fill="none" stroke="currentColor" strokeWidth={4.6} />
    <circle r={teeth > 4 ? 2.4 : 3.2} fill={BG} />
  </svg>
);

function Palette({ s }: { s: Section }) {
  return (
    <section className="mx-2 border-b-2 border-[#222830] pb-3">
      <header className="flex h-[42px] items-center pt-1 text-[#f3f3f3]">
        <button className="flex items-center text-xl leading-6">
          <svg viewBox="0 0 18 9" className="mt-1 mr-2 h-[9px] w-[18px]" aria-hidden="true"><path d="M0 0H18L9 9Z" fill="currentColor" /></svg>
          {s.title}
        </button>
        <button aria-label={`${s.title} settings`} className="ml-auto pr-0.5"><Gear className="size-5" /></button>
      </header>
      <div className="grid grid-cols-8">{s.main.map((c, k) => <PaletteCell key={k} cell={c} />)}</div>
      {s.row && <div className="mt-1 grid grid-cols-8">{s.row.map((c, k) => <PaletteCell key={k} cell={c} />)}</div>}
    </section>
  );
}

/* Toolbar and status bar drawings: one unit per pixel, 32 by 32. */
const S = ({ children }: { children: React.ReactNode }) => (
  <svg viewBox="0 0 32 32" className="size-8 overflow-visible" fill="none" stroke={W} strokeWidth={2} aria-hidden="true">{children}</svg>
);
const Pg = ({ x = 0, y = 0, w = 28, h = 32, c = W }: { x?: number; y?: number; w?: number; h?: number; c?: string }) => (
  <g stroke="none">
    <path d={`M${x} ${y}H${x + w - 10}V${y + 10}H${x + w}V${y + h}H${x}Z`} fill={c} />
    <path d={`M${x + w - 8} ${y}L${x + w} ${y + 8}H${x + w - 8}Z`} fill={L} />
  </g>
);
const SPencil = ({ x, y }: P) => <Pencil x={x} y={y} k={0.17} />;
const Rule = ({ x }: { x: number }) => <path d={`M${x} 5h18M${x} 24h16M${x + 6} 0v28M${x + 18} 12v10`} stroke="#8f9092" strokeWidth={1.5} />;
const Floppy = ({ w = 30 }: { w?: number }) => (
  <g stroke="none">
    <path d={`M1 1H${w + 1}V30H4L1 27Z`} fill="#b8b8b8" />
    <path d={`M7 0H${w - 5}V12H7ZM7 20H${w - 5}V31H7Z`} fill={BG} />
    <path d={`M8 1H${w - 6}V11H8ZM8 22H${w - 6}V30H8Z`} fill={L} />
    <path d="M10 24H12V28H10Z" fill={BG} />
  </g>
);
const Printer = ({ w = 32 }: { w?: number }) => (
  <g stroke="none">
    <path d={`M0 6H${w}V26H0Z`} fill="#c9c9c9" />
    <path d={`M0 6H${w}V16H0Z`} fill="#fff" />
    <path d={`M4 0H${w - 4}V12H4ZM4 20H${w - 4}V32H4Z`} fill={BG} />
    <path d={`M6 0H${w - 6}V10H6ZM6 21H${w - 6}V32H6Z`} fill="#fff" />
    <path d={`M8 22H${w - 8}V30H8Z`} fill={F} />
  </g>
);
const RArrow = ({ x, y }: P) => <path d={`M${x} ${y - 3}h9v-6l10 9l-10 9v-6h-9z`} fill={B} stroke="#2f3642" strokeWidth={3} paintOrder="stroke" />;

type Tool = { n: string; i: React.ReactNode; badge?: boolean; on?: boolean };
const toolGroups: Tool[][] = [
  [
    { n: "New", i: <S><Pg y={4} w={32} h={24} /></S> },
    { n: "Open", badge: true, i: <S><path d="M0 4H10L13 8H26V10H6L1 25H0Z" fill={W} stroke="none" /><path d="M8 12H32L25 28H2Z" fill={W} stroke="none" /></S> },
    { n: "Save", i: <S><Floppy /></S> },
    { n: "Save as", i: <S><Floppy w={28} /><SPencil x={16} y={32} /></S> },
  ],
  [
    { n: "Undo", i: <S><path d="M0 15.500L15 6V12C26 12 31 18 31 24Q26 18 15 18.500V25Z" fill={W} stroke="none" /></S> },
    { n: "Redo", i: <S><path d="M32 15.500L17 6V12C6 12 1 18 1 24Q6 18 17 18.500V25Z" fill={W} stroke="none" /></S> },
  ],
  [
    { n: "Print", i: <S><Printer /></S> },
    { n: "Batch print", badge: true, i: <S><Printer w={28} /><rect x={12} y={18} width={20} height={14} fill={BG} stroke="none" /><RArrow x={13} y={26} /></S> },
    { n: "Page setup", i: <S><Pg y={0} w={26} h={28} /><Rule x={0} /><rect x={11} y={14} width={21} height={18} fill={BG} stroke="none" /><path d="M13 16H31V32H13Z" fill={L} stroke="none" /><path d="M13 16H31V20H13Z" fill="#999" stroke="none" /><path d="M17 24h2M21 24h6M17 28h2M21 28h6" stroke="#555" /></S> },
    { n: "Plot style", i: <S><Pg y={0} w={26} h={28} /><Rule x={0} /><SPencil x={16} y={32} /></S> },
  ],
  [
    { n: "Import", i: <S><Pg x={4} w={28} /><path d="M4 4L17 12L4 22Z" fill={BG} stroke="none" /><RArrow x={0} y={12} /></S> },
    { n: "Export", on: true, i: <S><Pg x={0} w={28} /><RArrow x={13} y={22} /></S> },
    { n: "Attach", i: <S><Pg y={7} w={32} h={24} /><rect x={-1} y={0} width={13} height={21} rx={6} fill={BG} stroke="none" /><path stroke={B} d="M11 16Q8 19 5 18Q1 17 1 9Q1 1 6 1Q11 1 11 7Q11 13 8 13Q5 13 6 6" /></S> },
    { n: "Save to web", i: <S><g transform="translate(-1 2)"><Floppy w={28} /></g><circle cx={23} cy={9} r={11} fill={BG} stroke="none" /><circle cx={23} cy={9} r={8} stroke={B} /><path stroke={B} d="M15 9H31M23 1V17M23 1Q17 9 23 17Q29 9 23 1" strokeWidth={1.5} /></S> },
  ],
  [
    { n: "Zoom window", i: <S><path d="M29 16V1H1V27H16" stroke="#e6e6e6" /><circle cx={23.500} cy={23} r={5.500} fill={BG} /><path d="M27.500 27.500L31.500 31.500" stroke={TAN} strokeWidth={2.500} /></S> },
    { n: "Pan", i: <S><path d="M12 31C8 27 6 24 1 18Q3 15 8 20L9 21L5 7Q7 4 9 8L12 15L13 2Q15 -1 17 2L18 15L22 4Q24 2 25 5L22.500 17L28 11Q31 10 31 13L25 23Q24 29 21 31Z" fill={W} stroke="none" /></S> },
    { n: "Orbit", i: <S><path d="M23 8Q31 11 30 16Q27 21 16 21Q3 20 2 15Q2 10 12 9" stroke="#fff" /><path d="M21 4L28 9L21 13Z" fill="#fff" stroke="none" /><path d="M16 0V8M16 12V17M16 24V32" stroke={B} /></S> },
  ],
  [
    { n: "Match properties", i: <S><path d="M2 0H22V28H2Z" fill={W} stroke="none" /><path d="M5 3H17V11H5Z" fill={F} stroke={BG} /><path d="M6 16.500H17M6 22.500H13M11 13.500v6M9 19.500v6" stroke="#666" /><path d="M12 20L20 15L32 26L26 34Z" fill={BG} stroke="none" /><path d="M14 21L19 18L28 29L23 32Z" fill={Y} stroke="none" /><path d="M21 19L28 28M24 24L30 18" stroke={L} /></S> },
    { n: "Quick select", i: <S><path d="M18 1L6 10H13L10 16L22 6H15Z" fill={Y} stroke="none" /><path d="M0 8V30L5 25L9 32L12 30L9 23H14Z" fill="#fff" stroke="none" /><path d="M14 14H32V32H14Z" fill={L} stroke="none" /><path d="M17 19h2M21 19h8M17 24h2M21 24h8M17 29h2M21 29h8" stroke="#3d8ee8" /></S> },
    { n: "Locate", i: <S><path d="M0 0H16L8 16H0Z" fill={W} stroke="none" /><circle cx={21} cy={11} r={10} fill="#8fdc9b" stroke={BG} /><circle cx={12} cy={20} r={10} fill="#8fdc9b" stroke={BG} /><path d="M21 10V32M10 21H32M16 16H26V26H16Z" stroke={BG} strokeWidth={4} /><path d="M21 10V32M10 21H32M16 16H26V26H16Z" stroke="#fff" strokeWidth={2} /></S> },
    { n: "Replace", i: <S><circle cx={7} cy={7} r={7} fill="#8fdc9b" stroke="none" /><circle cx={25} cy={25} r={7} fill={F} stroke="none" /><path d="M16 5H25V10" stroke="#fff" strokeWidth={2.500} /><path d="M21 8H29L25 15Z" fill="#fff" stroke="none" /></S> },
    { n: "Clean up", i: <S><Pg x={3} w={26} h={28} /><path d="M9 10H15L17 22L21 34H3L9 22Z" fill={BG} stroke="none" /><path d="M11 10H14L15 24H10Z" fill={TAN} stroke="none" /><path d="M9 25H16L19 32H6Z" fill={Y} stroke="none" /></S> },
    { n: "Count", badge: true, i: <S><circle cx={11} cy={17} r={10} fill={G} /><path d="M11 17H29V31H11Z" fill={G} /><path d="M15 0H32V17H15Z" fill={BG} stroke="none" /><path d="M20 0L17 16M27 0L24 16M17 5H30M16 11H29" stroke={B} /></S> },
  ],
  [
    { n: "Compare", i: <S><path d="M0 2H13V30H0Z" fill={W} stroke="none" /><path d="M18 2H24V10H32V30H18Z" fill={W} stroke="none" /><path d="M26 2L32 8H26Z" fill={L} stroke="none" /><path d="M14.500 0V32" stroke={B} /><path d="M6.500 9h5v6h-5z" stroke="#e23b30" strokeWidth={2.500} /><path d="M5 19h5v5h-5z" stroke="#46a43c" strokeWidth={2.500} /><path d="M22 13h5v5h-5zM22 21h5v5h-5z" stroke="#777" strokeWidth={2.500} /></S> },
    { n: "Share", badge: true, i: <S><path d="M0 15L30 2L6 21ZM8 22L30 3L11 30ZM18 22L30 4L26 31Z" fill={B} stroke="none" /></S> },
    { n: "Activity insights", badge: true, i: <S><path d="M12 8H32V30H6V24H12Z" fill={W} stroke="none" /><path d="M1 2H26V24H1Z" fill="#5b6472" stroke={B} strokeWidth={1.500} /><path d="M4 16V10Q6 12 8 17T12 17T16 15T23 17" stroke={B} strokeWidth={1} /></S> },
  ],
];

const FourSquares = () => (
  <svg viewBox="0 0 28 28" className="size-7" aria-hidden="true"><path d="M0 0H14V14H0Z" fill={F} /><path d="M16 2H28V14H16ZM2 16H14V28H2ZM16 16H28V28H16Z" fill={W} /></svg>
);
const Plus = () => <svg viewBox="0 0 22 22" className="size-[22px]" stroke={W} strokeWidth={2} aria-hidden="true"><path d="M11 0V22M0 11H22" /></svg>;
const Chevrons = () => <svg viewBox="0 0 14 10" className="h-2.5 w-3.5" fill="none" stroke="#a3a7ae" strokeWidth={1.600} aria-hidden="true"><path d="M6 0L1 5L6 10M13 0L8 5L13 10" /></svg>;
const Down = ({ className }: { className: string }) => <svg viewBox="0 0 12 8" className={className} aria-hidden="true"><path d="M0 0H12L6 8Z" fill="currentColor" /></svg>;

const compass = "M16 0L20 12V19L28 31L22 29L18 25V22H14V25L10 29L4 31L12 19V12Z";
const statusTools: Tool[] = [
  { n: "Grid", i: <S><path d="M9 1V31M16 1V31M23 1V31M1 8H31M1 16H31M1 24H31" /></S> },
  { n: "Snap", i: <S><path strokeWidth={4} strokeDasharray="4 6" d="M4 6H28M4 16H28M4 26H28" /></S> },
  { n: "Ortho", i: <S><path d="M1 0V31H32M1 21H11V31" /></S> },
  { n: "Polar tracking", on: true, i: <S><path d="M25 9A13 13 0 1 0 27 23M28 17A13 13 0 0 1 27 23M15 17H34M15 17L29 2" stroke="#fff" /></S> },
  { n: "Dynamic input", i: <S><path d="M7 4V18M0 11H14" /><path d="M12 20H32V28H12Z" fill={W} stroke="none" /><path d="M15 22V26" stroke="#555" /></S> },
  { n: "Line weight", i: <S><path d="M0 4H32" /><path d="M0 12H16M0 25H16" strokeWidth={6} /><path d="M16 11H32M16 22H32" /></S> },
  { n: "Transparency", on: true, i: <S><rect x={3} y={3} width={26} height={26} stroke="#fff" /><path stroke="#fff" strokeWidth={4} strokeDasharray="4 4" d="M6 8H26M6 16H26M6 24H26M10 12H26M10 20H26" /></S> },
  { n: "Selection cycling", on: true, i: <S><path d="M6 1H2V29H6M16 1H20V12M6 5H14V12H6Z" stroke="#fff" /><circle cx={11} cy={20} r={4.500} stroke="#fff" /><path d="M18 14V30L22 26L26 33L29 31L25 25H30Z" fill="#fff" stroke="none" /></S> },
  { n: "Isometric", on: true, i: <S><path d="M22 3L2 27H33" stroke="#fff" /><circle cx={14} cy={14} r={3.500} fill="#fff" stroke="none" /></S> },
  { n: "Object snap", on: true, i: <S><path d="M12 5H32V31H5V12M1 1H9V9H1Z" stroke="#fff" /></S> },
  { n: "Annotation visibility", on: true, i: <S><g transform="translate(-3 0)"><path d={compass} fill="#fff" stroke="none" /></g><circle cx={26} cy={8} r={8} fill="#6a8dbd" stroke="none" /><circle cx={26} cy={8} r={6} fill="#fff" stroke="none" /></S> },
  { n: "Auto scale", i: <S><g transform="translate(-3 0)"><path d={compass} fill={W} stroke="none" /></g><path d="M28 1L19 12H24L22 20L31 8H26Z" fill={Y} stroke={BG} strokeWidth={1} /></S> },
  { n: "Annotation scale", i: <S><path d={compass} fill={W} stroke="none" /></S> },
];

const files = ["Drawing5", "rd", "xadrez_s2*", "Drawing9*"];
const log = [
  "Command:", "Command:", "Command:", "Command:", "Command: LINE", "Specify first point: 0,0",
  "Specify next point or [Undo]: 0,1", "Specify next point or [Undo]: 1,1",
  "Specify next point or [Close/Undo]: 1,0", "Specify next point or [Close/Undo]: c",
];

function ViewCompass() {
  return (
    <svg viewBox="0 0 280 280" className="absolute top-6 right-[27px] size-[280px]" role="img" aria-label="View cube: top">
      <circle cx={140} cy={140} r={108} fill="none" stroke="#494e54" strokeWidth={30} />
      <g fill="#a9abad" fontFamily="Liberation Sans, Arial, sans-serif" fontWeight={700} textAnchor="middle">
        <text x={140} y={45} fontSize={48}>N</text>
        <text x={139} y={269} fontSize={48}>S</text>
        <text x={27} y={155} fontSize={44}>W</text>
        <text x={252} y={157} fontSize={48}>E</text>
      </g>
      <rect x={87} y={88} width={104} height={103} fill="#aeb0b2" />
      <rect x={108} y={108} width={63} height={64} fill="#a0a4ab" />
      <text x={140} y={149} fontSize={26} fontWeight={700} textAnchor="middle" fill="#50545e" fontFamily="Liberation Sans Narrow, Open Sans Condensed, Noto Sans, sans-serif">TOP</text>
    </svg>
  );
}

export default function App() {
  return (
    <div className="flex h-screen flex-col overflow-hidden bg-[#222930] font-['Liberation_Sans',Arial,sans-serif] text-[#d0d0d0]">
      <header className="flex h-20 shrink-0 items-start gap-16 bg-[#3b4453] pt-[26px] pl-[397px]">
        {toolGroups.map((g, k) => (
          <div key={k} className="flex gap-0.5">
            {g.map((t) => (
              <button key={t.n} aria-label={t.n} className={t.on ? "relative grid h-[42px] w-16 place-items-center rounded-md bg-[#2a303b]" : "relative grid h-[42px] w-16 place-items-center"}>
                {t.i}
                {t.badge && <Badge className="top-0 right-0" />}
              </button>
            ))}
          </div>
        ))}
      </header>

      <div className="mt-0.5 flex min-h-0 flex-1">
        <aside className="flex w-[368px] shrink-0 flex-col bg-[#3d4350]">
          <div className="flex h-11 shrink-0 items-start text-2xl leading-8">
            <button className="h-11 w-[159px] pt-0.5 text-[#f3f3f3]">Drafting</button>
            <button className="h-[46px] w-[163px] border-2 border-t-0 border-[#222930] bg-[#30333f] text-[#a6a8ac]">Modeling</button>
            <button aria-label="Collapse palette" className="grid h-[46px] flex-1 place-items-center border-b-2 border-[#222930]"><Chevrons /></button>
          </div>
          {sections.map((s) => <Palette key={s.title} s={s} />)}
          <div className="mt-auto flex items-center gap-9 pb-[11px] pl-[31px]">
            <button aria-label="Add palette"><Plus /></button>
            <button aria-label="Palette list"><svg viewBox="0 0 26 22" className="h-[22px] w-[26px]" aria-hidden="true"><path d="M5 0H26V2H5ZM5 6H26V8H5ZM0 12H18V16H0ZM5 19H26V21H5ZM20 16L23 11L26 16Z" fill={W} /></svg></button>
          </div>
        </aside>

        <main className="ml-0.5 flex min-w-0 flex-1 flex-col">
          <nav className="flex h-11 shrink-0 gap-0.5 font-[Inter,'Noto_Sans',sans-serif] text-[22px] leading-7 text-[#a4a8af]">
            <button aria-label="Start" className="grid w-[46px] place-items-center bg-[#3b4453]"><FourSquares /></button>
            <button aria-label="New drawing" className="grid w-11 place-items-center bg-[#3b4453]"><Plus /></button>
            {files.map((f) => (
              <button key={f} className={f === "Drawing9*" ? "w-64 bg-[#4f5b70] px-1.5 pb-1 text-left font-semibold text-[#f3f3f3]" : "w-64 bg-[#3b4453] px-1.5 pb-1 text-left"}>{f}</button>
            ))}
            <div className="flex-1 bg-[#3b4453]" />
            <button aria-label="Expand panels" className="grid w-12 place-items-center bg-[#3b4453]"><Chevrons /></button>
          </nav>

          <div className="mt-0.5 flex min-h-0 flex-1">
            <div className="relative min-w-0 flex-1">
              <svg viewBox="370 128 2465 1624" preserveAspectRatio="xMinYMin meet" className="absolute inset-0 size-full" fill="none" aria-label="Drawing area">
                <rect x={1281} y={521} width={628} height={628} stroke="#ab2629" strokeWidth={2} />
                <g stroke="#e4e4e4" strokeWidth={2}>
                  <path d="M1281 1049V1148H1381" />
                  <rect x={1273} y={1139} width={17} height={17} />
                  <path d="M1284 1015L1296 1027L1308 1015M1296 1027V1039M1390 1121L1414 1145M1414 1121L1390 1145" />
                </g>
                <g stroke="#c413d0" strokeWidth={2}>
                  <path d="M2312 592H2379M2390 592H2457M2385 520V587M2385 598V664" />
                  <rect x={2380} y={587} width={11} height={11} />
                </g>
              </svg>

              <div className="absolute top-2.5 left-7 flex items-center gap-3 font-['Noto_Sans',sans-serif] text-[22px] font-bold leading-8 text-[#999b9d]">
                <button aria-label="Viewport controls"><svg viewBox="0 0 12 12" className="size-3" stroke="currentColor" strokeWidth={2} aria-hidden="true"><path d="M6 0V12M0 6H12" /></svg></button>
                <span className="mb-1 ml-3 h-7 w-0.5 bg-[#8c8e8f]" />
                <button>Top</button>
                <span className="mb-1 ml-1 h-7 w-0.5 bg-[#8c8e8f]" />
                <button>2D Wireframe</button>
              </div>

              <ViewCompass />
              <button className="absolute top-[341px] right-[116px] flex h-6 w-[102px] items-center justify-between rounded-lg bg-[#646c76] px-2.5 text-xl leading-6 text-[#23272f]">
                WCS
                <svg viewBox="0 0 20 11" className="h-[11px] w-5" aria-hidden="true"><path d="M1 1H19L10 10Z" fill="#9fb3b8" stroke="#23272f" strokeWidth={1.500} /></svg>
              </button>

              <div className="absolute inset-x-0 bottom-0 flex justify-center pr-[5px] font-['Noto_Sans',sans-serif]">
                <div className="flex w-[1000px] flex-col">
                  <div className="ml-20 flex bg-[#3b4453] pt-2.5 pl-2.5">
                    <ul className="flex-1 text-xl leading-[30px] text-[#babcc0]">{log.map((l, k) => <li key={k}>{l}</li>)}</ul>
                    <span className="mr-[11px] mb-1 h-12 w-2 self-end rounded-full bg-[#97999c]" />
                  </div>
                  <div className="flex h-[50px] items-center bg-[#3b4453] pr-5 pb-0.5 pl-[18px] text-[#b4b6b9]">
                    <button aria-label="Recent commands" className="flex w-[72px] items-center gap-1 pb-1">
                      <svg viewBox="0 0 28 18" className="h-[18px] w-7" fill="none" stroke="currentColor" strokeWidth={2.500} aria-hidden="true"><path d="M1 1L9 6.500L1 12M14 16.500H27" /></svg>
                      <Down className="h-2 w-3" />
                    </button>
                    <input aria-label="Command" placeholder="Type a command" className="min-w-0 flex-1 bg-transparent text-[22px] italic leading-8 outline-none placeholder:text-[#989da4]" />
                    <button aria-label="Command history" className="mr-6"><Down className="h-2 w-3 text-[#909499]" /></button>
                    <button aria-label="Detach history"><svg viewBox="0 0 26 27" className="h-[27px] w-[26px]" fill="none" stroke={W} strokeWidth={2} aria-hidden="true"><path d="M10 8H1V26H25V8H18M8 8V26" /><path d="M14 16V4" stroke={B} /><path d="M14 0L19 6H9Z" fill={B} stroke="none" /></svg></button>
                  </div>
                </div>
              </div>
            </div>

            <aside className="mb-[3px] flex w-[45px] flex-col gap-0.5 font-[Inter,'Noto_Sans',sans-serif] text-2xl leading-8 text-[#d4d4d6]">
              {["Layers and Properties", "Reference Manager", "Blocks"].map((t) => (
                <button key={t} className="flex flex-1 items-center justify-start bg-[#30333f]">
                  <span className="relative">
                    <span className="rotate-180 [writing-mode:vertical-rl]">{t}</span>
                    {t === "Blocks" && <Badge className="-top-1 left-0.5" />}
                  </span>
                </button>
              ))}
            </aside>
          </div>

          <footer className="my-0.5 flex h-11 shrink-0 gap-0.5 font-['Noto_Sans',sans-serif] text-[22px] leading-8 text-[#a4a8af]">
            <button className="w-[118px] bg-[#4f5b70] pr-1 pb-1 font-semibold text-white">Model</button>
            <button aria-label="New layout" className="grid w-11 place-items-center bg-[#3b4453]"><Plus /></button>
            <button className="w-[116px] bg-[#3b4453] pr-1 pb-1">Layout1</button>
            <button className="w-[116px] bg-[#3b4453] pr-1 pb-1">Layout2</button>
            <div className="flex-1 bg-[#3b4453]" />
            <div className="flex items-center gap-1 bg-[#3b4453] pr-2.5 pl-6">
              <span className="mr-1.5 font-[Inter,sans-serif] text-[22px] whitespace-pre text-[#bfc1c4]">1.757,  0.885 , 0.000</span>
              {statusTools.map((t) => (
                <button key={t.n} aria-label={t.n} className={t.on ? "grid size-10 place-items-center bg-[#6a8dbd]" : "grid size-10 place-items-center"}>{t.i}</button>
              ))}
              <button className="flex w-[52px] items-center gap-2 font-[Inter,sans-serif] text-[22px] text-[#c8cacc]">1:1<Down className="h-2 w-3" /></button>
              <button aria-label="Isolate objects" className="grid size-10 place-items-center"><S><path strokeWidth={2} d="M2 1H13V13H2ZM13 21L20 31H6Z" /><circle cx={25} cy={13} r={6} /></S></button>
              <button aria-label="Customize" className="grid size-10 place-items-center"><Gear className="size-8 text-[#d9d9d9]" teeth={4} /></button>
            </div>
          </footer>
        </main>
      </div>
    </div>
  );
}
